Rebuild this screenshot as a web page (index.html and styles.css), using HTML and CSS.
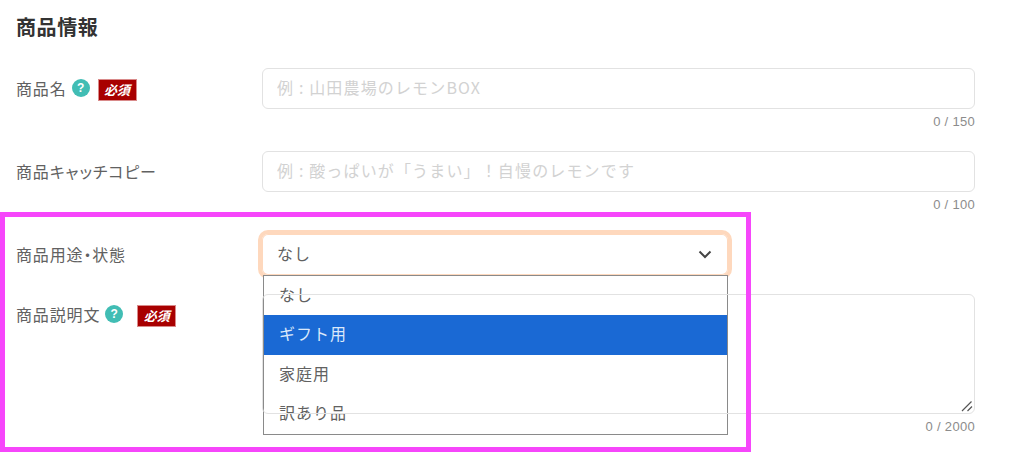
FILE: index.html
```html
<!DOCTYPE html>
<html lang="ja">
  <head>
    <title>商品情報</title>
    <link rel="stylesheet" href="styles.css">
  </head>
  <body>
    <form class="product-form">
      <h2 class="form-title">商品情報</h2>

      <div class="row row-first">
        <div class="label">商品名<span class="help">?</span><span class="required">必須</span></div>
        <div class="field">
          <input class="text-input" type="text" placeholder="例 : 山田農場のレモンBOX">
          <div class="counter">0 / 150</div>
        </div>
      </div>

      <div class="row">
        <div class="label">商品キャッチコピー</div>
        <div class="field">
          <input class="text-input" type="text" placeholder="例 : 酸っぱいが「うまい」！自慢のレモンです">
          <div class="counter">0 / 100</div>
        </div>
      </div>

      <div class="row row-select">
        <div class="label">商品用途・状態</div>
        <div class="field">
          <div class="select-wrap">
            <div class="select-box">
              <span>なし</span>
              <svg class="chevron" width="14" height="9" viewBox="0 0 14 9">
                <path d="M1.5 1.5 L7 7 L12.5 1.5" fill="none" stroke="#444" stroke-width="2"/>
              </svg>
            </div>
            <ul class="select-menu">
              <li>なし</li>
              <li class="selected">ギフト用</li>
              <li>家庭用</li>
              <li>訳あり品</li>
            </ul>
          </div>
        </div>
      </div>

      <div class="row">
        <div class="label">商品説明文<span class="help">?</span><span class="required required-wide">必須</span></div>
        <div class="field">
          <div class="textarea-box">
            <svg class="grip" width="12" height="12" viewBox="0 0 12 12">
              <path d="M1 11 L10.5 1.5 M6.5 11 L11 6.5" fill="none" stroke="#555" stroke-width="1.2"/>
            </svg>
          </div>
          <div class="counter">0 / 2000</div>
        </div>
      </div>
    </form>

    <div class="highlight-frame"></div>
  </body>
</html>
```

FILE: styles.css
```css
body {
  font-family: "Noto Sans CJK JP", "Noto Sans", sans-serif;
  background-color: #fff;
  color: #616161;
  margin: 0;
  overflow: hidden;
}
.product-form {
  width: 959px;
  padding: 14px 0 0 16px;
}
.form-title {
  font-size: 20px;
  line-height: 26px;
  letter-spacing: 0.6px;
  font-weight: bold;
  color: #333;
  margin: 0;
}
.row {
  display: grid;
  grid-template-columns: 246px 713px;
}
.row-first {
  margin-top: 28px;
}
.label {
  display: flex;
  align-items: center;
  height: 39px;
  font-feature-settings: "palt";
  font-size: 16px;
  letter-spacing: 0.85px;
  white-space: nowrap;
}
.help {
  width: 18px;
  height: 18px;
  margin-left: 5px;
  border-radius: 50%;
  background-color: #41bdb4;
  color: #fff;
  font-family: "Liberation Sans", sans-serif;
  font-size: 12px;
  font-weight: bold;
  letter-spacing: 0;
  line-height: 18px;
  text-align: center;
}
.required {
  width: 39px;
  height: 22px;
  margin: 5px 0 0 8px;
  background-color: #a80000;
  border: 1px solid #d98a8a;
  box-sizing: border-box;
  color: #fff;
  font-size: 13px;
  font-weight: bold;
  font-style: italic;
  letter-spacing: 0;
  line-height: 19px;
  text-align: center;
}
.required-wide {
  margin-left: 14px;
}
.field {
  display: flex;
  flex-direction: column;
}
.text-input {
  height: 41px;
  box-sizing: border-box;
  border: 1px solid #e2e2e2;
  border-radius: 6px;
  padding: 0 14px 3px;
  font-family: inherit;
  font-size: 16px;
  letter-spacing: 1.15px;
  outline: none;
}
.text-input::placeholder {
  color: #d2d2d2;
}
.counter {
  height: 42px;
  padding-top: 5px;
  box-sizing: border-box;
  font-family: "Liberation Sans", sans-serif;
  font-size: 13px;
  line-height: 16px;
  letter-spacing: 0.3px;
  color: #8c8c8c;
  text-align: right;
}
.row-select {
  height: 60px;
}
.select-wrap {
  position: relative;
  width: 466px;
}
.select-box {
  display: flex;
  justify-content: space-between;
  align-items: center;
  height: 41px;
  box-sizing: border-box;
  padding: 0 16px 3px 15px;
  border-radius: 6px;
  box-shadow: 0 0 0 4px #fed8bd, inset 0 0 0 1px #fed8bd;
  font-size: 16px;
  letter-spacing: 1px;
}
.chevron {
  margin-top: 3px;
}
.select-menu {
  position: absolute;
  top: 41px;
  left: 1px;
  width: 465px;
  box-sizing: border-box;
  margin: 0;
  padding: 0;
  list-style: none;
  background-color: #fff;
  border: 1px solid #8a8a8a;
  font-size: 16px;
  letter-spacing: 1px;
}
.select-menu li {
  height: 39.4px;
  line-height: 37px;
  padding-left: 15px;
}
.select-menu .selected {
  background-color: #1a69d4;
  color: #dbe8fa;
}
.textarea-box {
  position: relative;
  height: 120px;
  box-sizing: border-box;
  border: 1px solid #e2e2e2;
  border-radius: 6px;
}
.grip {
  position: absolute;
  right: 1px;
  bottom: 1px;
}
.highlight-frame {
  position: absolute;
  left: 0;
  top: 212px;
  width: 751px;
  height: 240px;
  box-sizing: border-box;
  border: 5px solid #f646fb;
  pointer-events: none;
}
```
